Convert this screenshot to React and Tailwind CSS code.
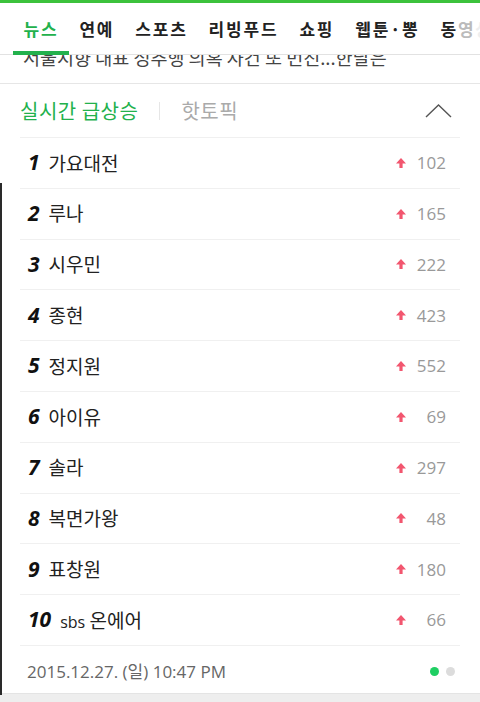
const tabs = ["뉴스", "연예", "스포츠", "리빙푸드", "쇼핑", "웹툰·뽕", "동영상"];

const ranks = [
  { name: "가요대전", count: 102 },
  { name: "루나", count: 165 },
  { name: "시우민", count: 222 },
  { name: "종현", count: 423 },
  { name: "정지원", count: 552 },
  { name: "아이유", count: 69 },
  { name: "솔라", count: 297 },
  { name: "복면가왕", count: 48 },
  { name: "표창원", count: 180 },
  { name: "sbs 온에어", count: 66 },
];

const font = { fontFamily: '"Noto Sans CJK KR", "Noto Sans", sans-serif' };
const latin = { fontFamily: '"Open Sans", "Noto Sans CJK KR", sans-serif' };

function UpArrow() {
  return (
    <svg width="10" height="10" viewBox="0 0 10 10" className="block">
      <path d="M5 0 L10 5.5 L6.6 5.5 L6.6 10 L3.4 10 L3.4 5.5 L0 5.5 Z" fill="#f2566f" />
    </svg>
  );
}

export default function App() {
  return (
    <div className="relative w-[480px] h-[702px] overflow-hidden bg-white" style={font}>
      {/* top bar */}
      <div className="h-[3px] bg-[#3cc23c]" />
      <nav className="flex items-center h-[52px] pl-[13px] border-b border-[#e2e2e2] bg-white whitespace-nowrap">
        {tabs.map((t, i) => (
          <div
            key={t}
            className={
              i === 0
                ? "relative shrink-0 h-full flex items-center px-[10.5px] text-[17px] tracking-[1.8px] font-bold text-[#22b14c]"
                : "shrink-0 h-full flex items-center px-[10.5px] text-[17px] tracking-[1.8px] font-bold text-[#222]"
            }
          >
            {i === tabs.length - 1 ? (
              <>
                동<span className="text-[#bbb]">영</span>
                <span className="text-[#eee]">상</span>
              </>
            ) : (
              t
            )}
            {i === 0 && <span className="absolute left-0 right-0 bottom-[-1px] h-[4px] bg-[#22b14c]" />}
          </div>
        ))}
      </nav>

      {/* clipped headline */}
      <div className="h-[29px] overflow-hidden border-b border-[#e6e6e6] px-[23px]">
        <p className="mt-[-13px] text-[18.5px] leading-[30px] text-[#444] whitespace-nowrap">
          서울시향 대표 성추행 의혹 사건 또 번진...한달은
        </p>
      </div>

      {/* realtime card */}
      <section className="bg-white">
        <div className="flex items-center h-[54px] mx-[20px] border-b border-[#f0f0f0]">
          <span className="text-[20px] tracking-[0.5px] text-[#22b14c]">실시간 급상승</span>
          <span className="mx-[21px] w-px h-[18px] bg-[#e6e6e6]" />
          <span className="text-[20px] tracking-[0.5px] text-[#aaa]">핫토픽</span>
          <svg width="27" height="14" viewBox="0 0 27 14" className="ml-auto mr-[8px]">
            <path d="M1 13 L13.5 1 L26 13" fill="none" stroke="#555" strokeWidth="1.4" />
          </svg>
        </div>

        <ul className="mx-[20px]">
          {ranks.map((r, i) => (
            <li key={r.name} className="flex items-center h-[50.8px] border-b border-[#f0f0f0] pl-[8px] pr-[14px]">
              <span className="text-[21px] font-bold italic text-[#111] mr-[9px]" style={latin}>
                {i + 1}
              </span>
              {r.name.startsWith("sbs") ? (
                <span className="text-[19px] text-[#222]">
                  <span className="text-[16px]" style={latin}>sbs</span> 온에어
                </span>
              ) : (
                <span className="text-[19px] text-[#222]">{r.name}</span>
              )}
              <span className="ml-auto">
                <UpArrow />
              </span>
              <span className="w-[40px] text-right text-[17px] text-[#999]" style={latin}>
                {r.count}
              </span>
            </li>
          ))}
        </ul>

        <div className="flex items-center h-[47px] mx-[20px] pt-[4px] pl-[7px] pr-[5px]">
          <span className="text-[17px] text-[#666]" style={latin}>
            2015.12.27. (일) 10:47 PM
          </span>
          <span className="ml-auto flex items-center gap-[7px]">
            <span className="w-[9px] h-[9px] rounded-full bg-[#1fcf63]" />
            <span className="w-[9px] h-[9px] rounded-full bg-[#dcdcdc]" />
          </span>
        </div>
      </section>

      <div className="h-[10px] bg-[#eeeeee] border-t border-[#e4e4e4]" />

      {/* left edge artifact */}
      <div className="absolute left-0 top-[183px] w-[2px] h-[512px] bg-[#2a2a2a]" />
    </div>
  );
}
